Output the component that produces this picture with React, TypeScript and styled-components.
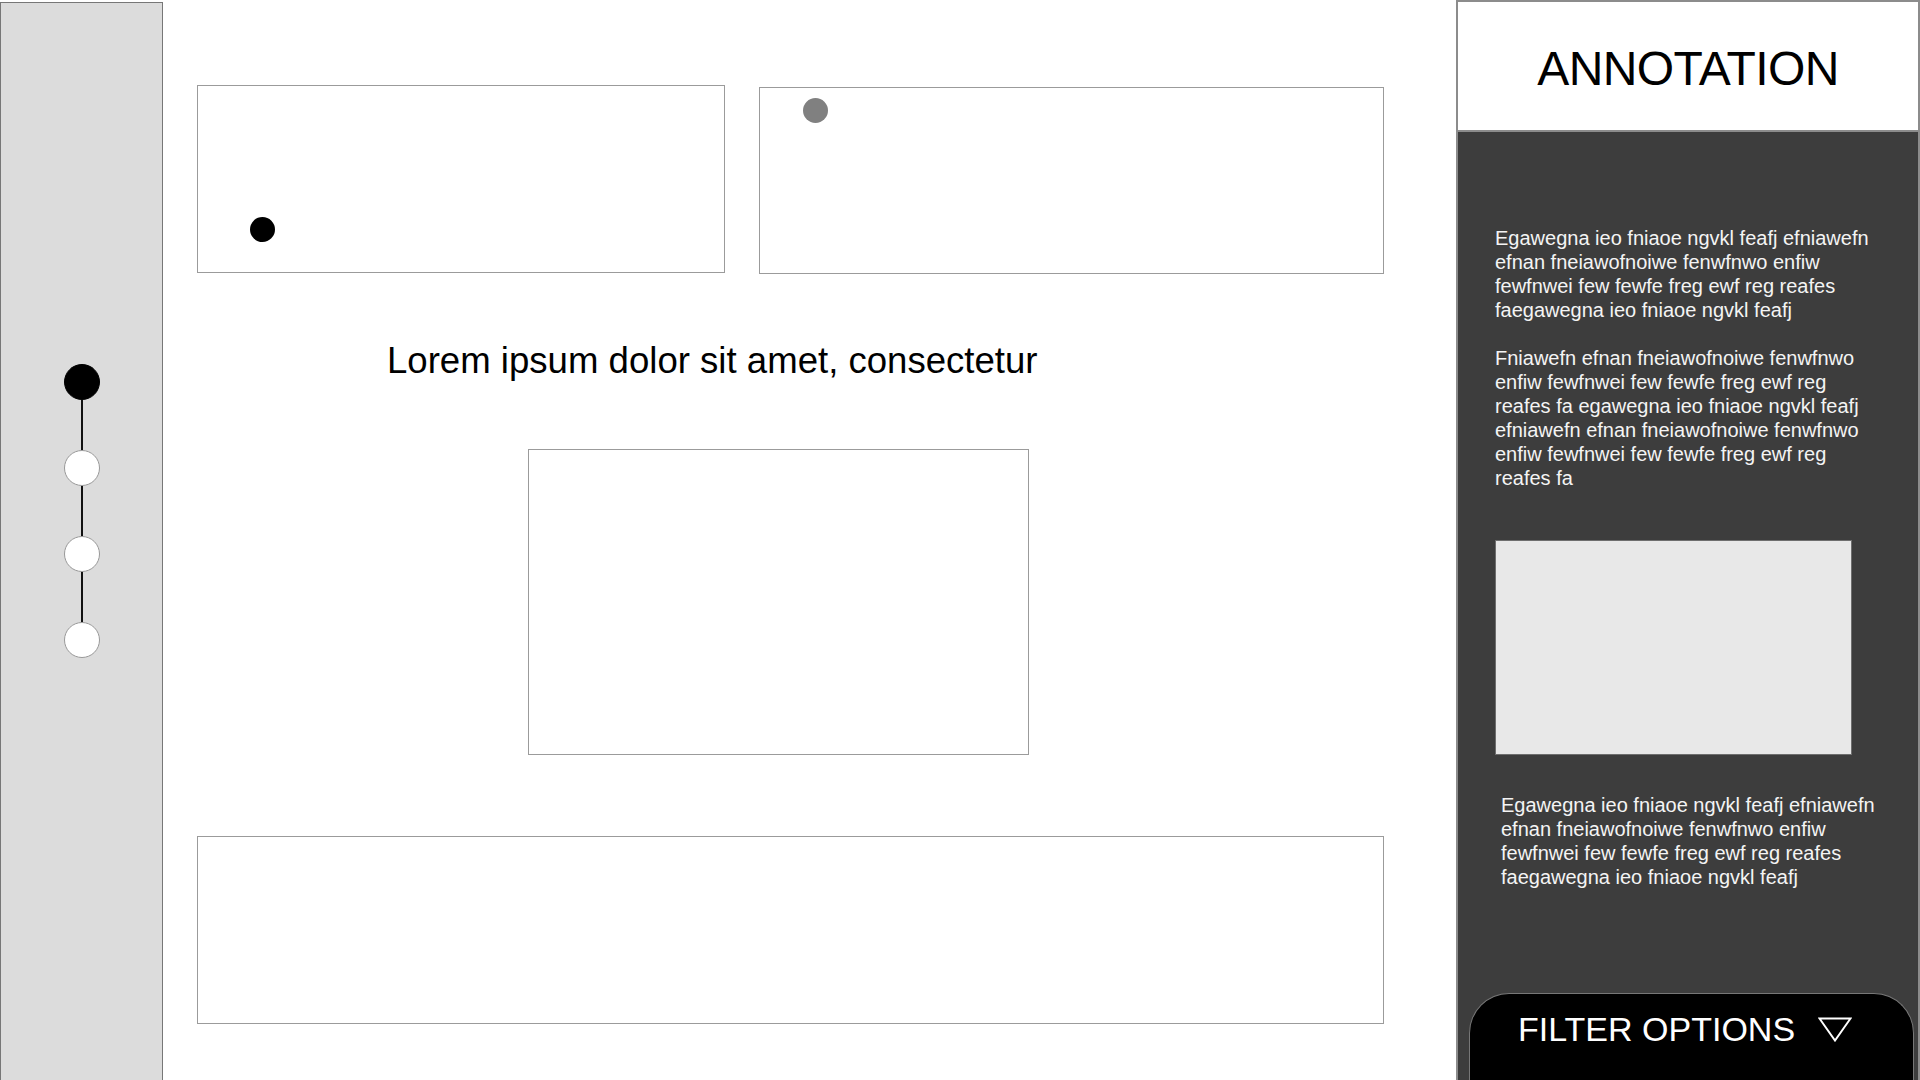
import styled, { createGlobalStyle } from 'styled-components'

const GlobalStyle = createGlobalStyle`
  html, body {
    margin: 0;
    padding: 0;
    background: #fff;
    overflow: hidden;
  }
  body {
    font-family: 'Liberation Sans', Arial, Helvetica, sans-serif;
  }
  * {
    box-sizing: border-box;
  }
`

const StyledPage = styled.div`
  display: flex;
  width: 1920px;
  height: 1080px;
  overflow: hidden;
`

const StyledSidebar = styled.aside`
  width: 163px;
  flex-shrink: 0;
  margin-top: 2px;
  padding-top: 361px;
  background: #dcdcdc;
  border: 1px solid #777;
  border-bottom: none;
  display: flex;
  flex-direction: column;
  align-items: center;
`

const StyledStep = styled.div<{ $active?: boolean }>`
  width: 36px;
  height: 36px;
  border-radius: 50%;
  background: ${(p) => (p.$active ? '#000' : '#fff')};
  border: 1px solid ${(p) => (p.$active ? '#000' : '#999')};
`

const StyledConnector = styled.div`
  width: 2px;
  height: 50px;
  background: #111;
`

const StyledMain = styled.main`
  flex: 1;
  padding: 85px 0 0 34px;
  display: flex;
  flex-direction: column;
  align-items: flex-start;
`

const StyledTopRow = styled.div`
  display: grid;
  grid-template-columns: 528px 625px;
  column-gap: 34px;
  align-items: start;
`

const StyledFrame = styled.div<{ $w: number; $h: number; $mt?: number; $ml?: number }>`
  position: relative;
  width: ${(p) => p.$w}px;
  height: ${(p) => p.$h}px;
  margin-top: ${(p) => p.$mt ?? 0}px;
  margin-left: ${(p) => p.$ml ?? 0}px;
  background: #fff;
  border: 1px solid #9b9b9b;
`

const StyledPin = styled.span<{ $color: string; $x: number; $y: number }>`
  position: absolute;
  left: ${(p) => p.$x}px;
  top: ${(p) => p.$y}px;
  width: 25px;
  height: 25px;
  border-radius: 50%;
  background: ${(p) => p.$color};
`

const StyledHeading = styled.h2`
  margin: 66px 0 0 190px;
  font-size: 36.6px;
  line-height: 42px;
  font-weight: 400;
  color: #000;
  white-space: nowrap;
`

const StyledPanel = styled.section`
  width: 464px;
  flex-shrink: 0;
  display: flex;
  flex-direction: column;
  background: #3d3d3d;
  border: 2px solid #8c8c8c;
  border-bottom: none;
`

const StyledPanelHeader = styled.header`
  height: 130px;
  padding-top: 6px;
  background: #fff;
  border-bottom: 2px solid #8c8c8c;
  display: flex;
  align-items: center;
  justify-content: center;
  font-size: 48px;
  line-height: 56px;
  letter-spacing: -0.6px;
  color: #000;
`

const StyledPanelBody = styled.div`
  flex: 1;
  padding: 94px 0 0 37px;
  display: flex;
  flex-direction: column;
  align-items: flex-start;
`

const StyledNote = styled.p<{ $mt?: number; $ml?: number }>`
  width: 385px;
  margin: ${(p) => p.$mt ?? 0}px 0 0 ${(p) => p.$ml ?? 0}px;
  font-size: 20px;
  line-height: 24px;
  color: #f4f4f4;
`

const StyledThumb = styled.div`
  width: 357px;
  height: 215px;
  margin-top: 50px;
  background: #e8e8e8;
  border: 1px solid #6e6e6e;
`

const StyledFilter = styled.button`
  height: 87px;
  margin: 0 4px 0 11px;
  padding: 15px 0 0 48px;
  display: flex;
  align-items: flex-start;
  background: #000;
  border: 1px solid #777;
  border-bottom: none;
  border-radius: 40px 40px 0 0;
  font-family: inherit;
  cursor: pointer;
`

const StyledFilterLabel = styled.span`
  display: flex;
  align-items: center;
  gap: 23px;
  height: 40px;
  font-size: 34px;
  line-height: 40px;
  color: #fff;
`

const noteA =
  'Egawegna ieo fniaoe ngvkl feafj efniawefn efnan fneiawofnoiwe fenwfnwo enfiw fewfnwei few fewfe freg ewf reg reafes faegawegna ieo fniaoe ngvkl feafj'
const noteB =
  'Fniawefn efnan fneiawofnoiwe fenwfnwo enfiw fewfnwei few fewfe freg ewf reg reafes fa egawegna ieo fniaoe ngvkl feafj efniawefn efnan fneiawofnoiwe fenwfnwo enfiw fewfnwei few fewfe freg ewf reg reafes fa'

const steps = [true, false, false, false]

const App = () => {
  return (
    <>
      <GlobalStyle />
      <StyledPage>
        <StyledSidebar>
          {steps.map((active, i) => (
            <div key={i} style={{ display: 'contents' }}>
              {i > 0 && <StyledConnector />}
              <StyledStep $active={active} />
            </div>
          ))}
        </StyledSidebar>

        <StyledMain>
          <StyledTopRow>
            <StyledFrame $w={528} $h={188}>
              <StyledPin $color="#000" $x={52} $y={131} />
            </StyledFrame>
            <StyledFrame $w={625} $h={187} $mt={2}>
              <StyledPin $color="#808080" $x={43} $y={10} />
            </StyledFrame>
          </StyledTopRow>
          <StyledHeading>Lorem ipsum dolor sit amet, consectetur</StyledHeading>
          <StyledFrame $w={501} $h={306} $mt={67} $ml={331} />
          <StyledFrame $w={1187} $h={188} $mt={81} />
        </StyledMain>

        <StyledPanel>
          <StyledPanelHeader>ANNOTATION</StyledPanelHeader>
          <StyledPanelBody>
            <StyledNote>{noteA}</StyledNote>
            <StyledNote $mt={24}>{noteB}</StyledNote>
            <StyledThumb />
            <StyledNote $mt={38} $ml={6}>
              {noteA}
            </StyledNote>
          </StyledPanelBody>
          <StyledFilter>
            <StyledFilterLabel>
              FILTER OPTIONS
              <svg width="34" height="25" viewBox="0 0 34 25">
                <polygon
                  points="1.5,1.5 32.5,1.5 17,23.5"
                  fill="none"
                  stroke="#fff"
                  strokeWidth="2"
                  strokeLinejoin="miter"
                />
              </svg>
            </StyledFilterLabel>
          </StyledFilter>
        </StyledPanel>
      </StyledPage>
    </>
  )
}

export default App
